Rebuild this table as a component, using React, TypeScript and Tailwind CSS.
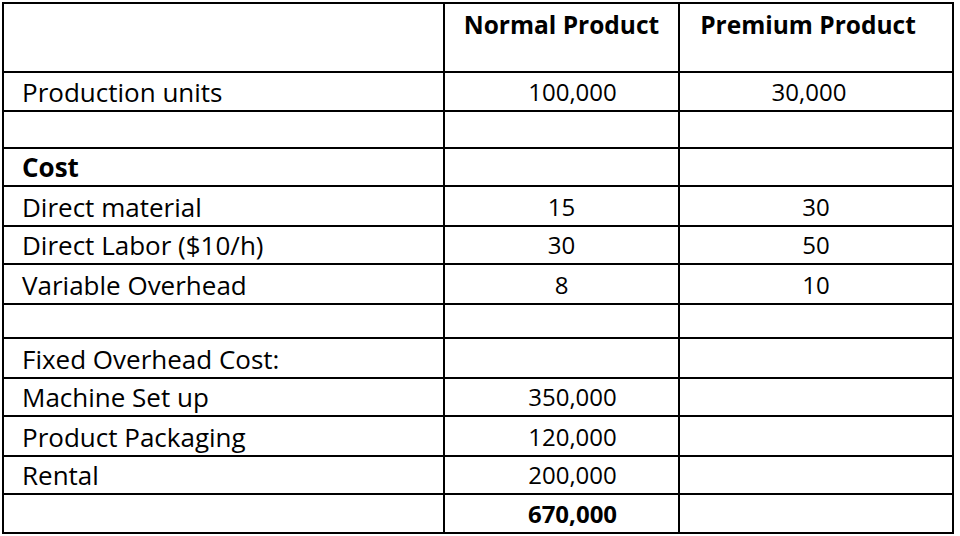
const rows: { label: string; normal: string; premium: string; bold?: 'label' | 'normal'; h: string }[] = [
  { label: 'Production units', normal: '100,000', premium: '30,000', h: 'h-[39px]' },
  { label: '', normal: '', premium: '', h: 'h-[37px]' },
  { label: 'Cost', normal: '', premium: '', bold: 'label', h: 'h-[38px]' },
  { label: 'Direct material', normal: '15', premium: '30', h: 'h-[40px]' },
  { label: 'Direct Labor ($10/h)', normal: '30', premium: '50', h: 'h-[38px]' },
  { label: 'Variable Overhead', normal: '8', premium: '10', h: 'h-[40px]' },
  { label: '', normal: '', premium: '', h: 'h-[34px]' },
  { label: 'Fixed Overhead Cost:', normal: '', premium: '', h: 'h-[40px]' },
  { label: 'Machine Set up', normal: '350,000', premium: '', h: 'h-[38px]' },
  { label: 'Product Packaging', normal: '120,000', premium: '', h: 'h-[40px]' },
  { label: 'Rental', normal: '200,000', premium: '', h: 'h-[38px]' },
  { label: '', normal: '670,000', premium: '', bold: 'normal', h: 'h-[39px]' },
]

export default function App() {
  return (
    <div className="w-[960px] h-[536px] bg-white pt-[2px] pl-[2px] font-['Open_Sans',sans-serif] text-[24px] text-black">
      <table className="table-fixed border-collapse w-[950px]">
        <colgroup>
          <col className="w-[441px]" />
          <col className="w-[235px]" />
          <col className="w-[274px]" />
        </colgroup>
        <thead>
          <tr className="h-[69px]">
            <th className="border-2 border-black" />
            <th className="border-2 border-black align-top pt-[6px] font-bold text-[24.5px] leading-[30px]">Normal Product</th>
            <th className="border-2 border-black align-top pt-[6px] pr-[16px] font-bold text-[24.5px] leading-[30px]">Premium Product</th>
          </tr>
        </thead>
        <tbody>
          {rows.map((r, i) => (
            <tr key={i} className={r.h}>
              <td className={`border-2 border-black pl-[18px] align-bottom pb-[3px] text-[26px] leading-[30px] ${r.bold === 'label' ? 'font-bold' : ''}`}>
                {r.label}
              </td>
              <td className={`border-2 border-black text-center align-bottom pb-[3px] leading-[30px] ${r.normal.length > 3 ? 'pl-[22px]' : ''} ${r.bold === 'normal' ? 'font-bold' : ''}`}>
                {r.normal}
              </td>
              <td className={`border-2 border-black text-center align-bottom pb-[3px] leading-[30px] ${r.premium.length > 3 ? 'pr-[14px]' : ''}`}>
                {r.premium}
              </td>
            </tr>
          ))}
        </tbody>
      </table>
    </div>
  )
}
